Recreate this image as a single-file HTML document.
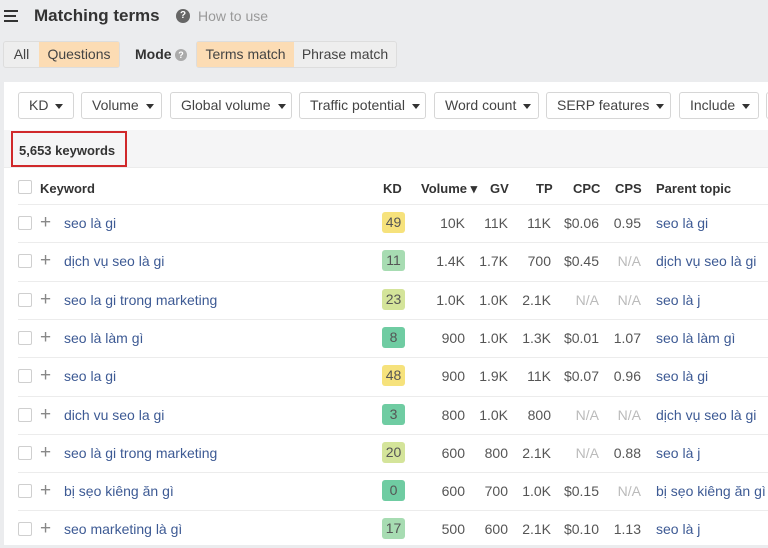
<!DOCTYPE html>
<html><head><meta charset="utf-8"><style>
*{margin:0;padding:0;box-sizing:border-box}
body{width:768px;height:545px;overflow:hidden;background:#ebecee;font-family:"Liberation Sans",sans-serif;position:relative;color:#333}
.a{position:absolute;white-space:nowrap}
.panel{position:absolute;left:4px;top:82px;width:764px;height:463px;background:#fff}
.band{position:absolute;left:4px;top:130px;width:764px;height:38px;background:#f5f5f6;border-bottom:1px solid #ececec}
.btn{position:absolute;top:92px;height:27px;border:1px solid #d6d6d6;border-radius:3px;background:#fff;font-size:14px;color:#444;line-height:25px;padding-left:10px;white-space:nowrap}
.btn i{display:inline-block;margin-left:7px;vertical-align:middle;border-left:4px solid transparent;border-right:4px solid transparent;border-top:5px solid #333}
.seg{position:absolute;top:42px;height:25px;font-size:14px;line-height:25px;color:#444;text-align:center}
.row{position:absolute;left:18px;width:750px;height:38px;border-top:1px solid #ececec}
.cb{position:absolute;left:18px;width:14px;height:14px;border:1px solid #cfcfcf;border-radius:2px;background:#fff}
.plus{position:absolute;left:40px;font-size:19px;color:#888;line-height:16px}
.kw{position:absolute;left:64px;font-size:14px;color:#3d5a94}
.b{position:absolute;left:382px;width:23px;height:21px;border-radius:3px;font-size:14px;color:#555;text-align:center;line-height:21px}
.n{position:absolute;font-size:14px;color:#555;text-align:right}
.na{color:#bbb}
.h{position:absolute;top:181px;font-size:13px;font-weight:bold;color:#333}
</style></head><body>
<div class="a" style="left:4px;top:10px;width:14px;height:2px;background:#333"></div>
<div class="a" style="left:4px;top:15px;width:12px;height:2px;background:#333"></div>
<div class="a" style="left:4px;top:20px;width:14px;height:2px;background:#333"></div>
<div class="a" style="left:34px;top:6px;font-size:17px;font-weight:bold;color:#333">Matching terms</div>
<div class="a" style="left:176px;top:9px;width:14px;height:14px;border-radius:50%;background:#666;color:#fff;font-size:10px;font-weight:bold;text-align:center;line-height:14px">?</div>
<div class="a" style="left:198px;top:8px;font-size:14px;color:#999">How to use</div>
<div class="a" style="left:3px;top:41px;width:117px;height:27px;border:1px solid #ddd;border-radius:3px;background:#eee"></div>
<div class="seg" style="left:4px;width:35px">All</div>
<div class="seg" style="left:39px;width:80px;background:#fcdcb4">Questions</div>
<div class="a" style="left:135px;top:46px;font-size:14px;font-weight:bold;color:#333">Mode</div>
<div class="a" style="left:175px;top:49px;width:12px;height:12px;border-radius:50%;background:#aaa;color:#fff;font-size:9px;font-weight:bold;text-align:center;line-height:12px">?</div>
<div class="a" style="left:196px;top:41px;width:201px;height:27px;border:1px solid #ddd;border-radius:3px;background:#eee"></div>
<div class="seg" style="left:197px;width:97px;background:#fcdcb4">Terms match</div>
<div class="seg" style="left:294px;width:102px">Phrase match</div>
<div class="panel"></div>
<div class="btn" style="left:18px;width:56px">KD<i></i></div>
<div class="btn" style="left:81px;width:81px">Volume<i></i></div>
<div class="btn" style="left:170px;width:122px">Global volume<i></i></div>
<div class="btn" style="left:299px;width:127px">Traffic potential<i></i></div>
<div class="btn" style="left:434px;width:105px">Word count<i></i></div>
<div class="btn" style="left:546px;width:125px">SERP features<i></i></div>
<div class="btn" style="left:679px;width:80px">Include<i></i></div>
<div class="btn" style="left:766px;width:20px"></div>
<div class="band"></div>
<div class="a" style="left:11px;top:131px;width:116px;height:36px;border:2px solid #d0282a"></div>
<div class="a" style="left:19px;top:143px;font-size:13px;font-weight:bold;color:#333">5,653 keywords</div>
<div class="cb" style="top:180px"></div>
<div class="h" style="left:40px">Keyword</div>
<div class="h" style="left:383px">KD</div>
<div class="h" style="left:421px">Volume ▾</div>
<div class="h" style="left:490px">GV</div>
<div class="h" style="left:536px">TP</div>
<div class="h" style="left:573px">CPC</div>
<div class="h" style="left:615px">CPS</div>
<div class="h" style="left:656px">Parent topic</div>
<div id="rows"></div>
<script>
var d=[["seo là gi",49,"10K","11K","11K","$0.06","0.95","seo là gi"],
["dịch vụ seo là gi",11,"1.4K","1.7K","700","$0.45","N/A","dịch vụ seo là gi"],
["seo la gi trong marketing",23,"1.0K","1.0K","2.1K","N/A","N/A","seo là j"],
["seo là làm gì",8,"900","1.0K","1.3K","$0.01","1.07","seo là làm gì"],
["seo la gi",48,"900","1.9K","11K","$0.07","0.96","seo là gi"],
["dich vu seo la gi",3,"800","1.0K","800","N/A","N/A","dịch vụ seo là gi"],
["seo là gi trong marketing",20,"600","800","2.1K","N/A","0.88","seo là j"],
["bị sẹo kiêng ăn gì",0,"600","700","1.0K","$0.15","N/A","bị sẹo kiêng ăn gì"],
["seo marketing là gì",17,"500","600","2.1K","$0.10","1.13","seo là j"]];
function col(k){return k>=40?"#f6e27c":k>=18?"#d4e49a":k>=10?"#a7dcb2":"#6fcca2"}
var h="",r=[465,508,551,599,641];
d.forEach(function(x,i){var y=204+i*38.3,c=y+19;
h+='<div class="row" style="top:'+y+'px"></div>';
h+='<div class="cb" style="top:'+(c-7)+'px"></div><div class="plus" style="top:'+(c-8)+'px">+</div>';
h+='<div class="kw" style="top:'+(c-8)+'px">'+x[0]+'</div>';
h+='<div class="b" style="top:'+(c-11)+'px;background:'+col(x[1])+'">'+x[1]+'</div>';
for(var j=0;j<5;j++){var v=x[j+2];h+='<div class="n'+(v=="N/A"?" na":"")+'" style="top:'+(c-8)+'px;right:'+(768-r[j])+'px">'+v+'</div>';}
h+='<div class="kw" style="left:656px;top:'+(c-8)+'px">'+x[7]+'</div>';});
document.getElementById("rows").innerHTML=h;
</script>
</body></html>
